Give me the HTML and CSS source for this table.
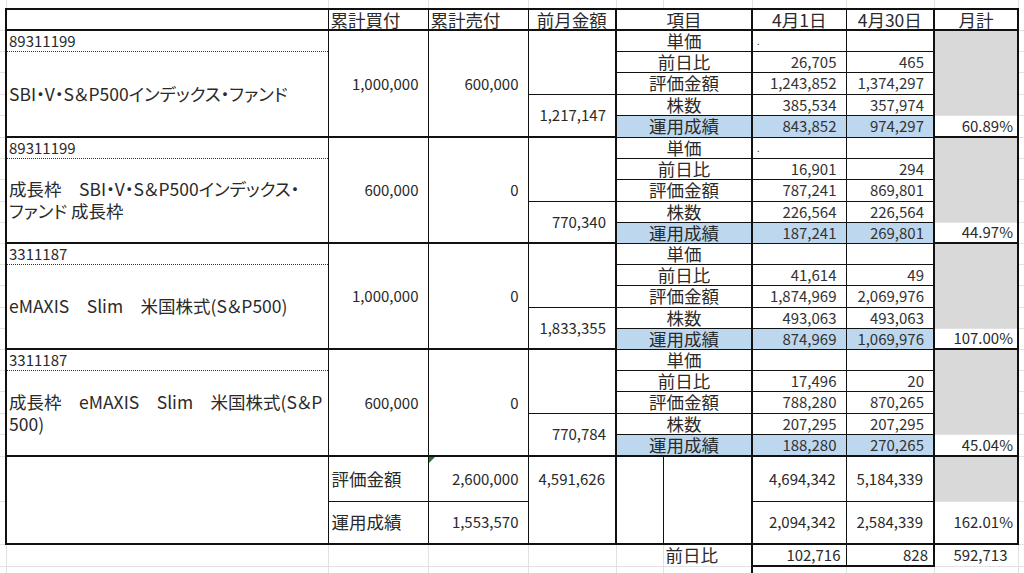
FILE: index.html
```html
<!DOCTYPE html>
<html lang="ja">
<head>
<meta charset="utf-8">
<title>運用成績</title>
<link rel="stylesheet" href="styles.css">
</head>
<body>
<table class="sheet">
<colgroup>
<col class="w-m"><col class="w-a"><col class="w-b"><col class="w-c"><col class="w-d"><col class="w-e1"><col class="w-e2"><col class="w-f"><col class="w-g"><col class="w-h"><col class="w-m2">
</colgroup>
<tbody>
<tr class="h9">
<td class="gt"></td><td class="gt"></td><td class="gt"></td><td class="gt"></td><td class="gt"></td><td class="gt"></td><td class="gt"></td><td class="gt"></td><td class="gt"></td><td class="gt"></td><td class="gt"></td>
</tr>
<tr class="h21">
<td class="m"></td>
<td class="hd hd-a"></td>
<td class="hd lbl">累計買付</td>
<td class="hd lbl">累計売付</td>
<td class="hd ctr">前月金額</td>
<td class="hd ctr sep" colspan="2">項目</td>
<td class="hd ctr sep">4月1日</td>
<td class="hd ctr">4月30日</td>
<td class="hd ctr sep last">月計</td>
<td class="m"></td>
</tr>

<!-- block 1 -->
<tr class="h21">
<td class="m"></td>
<td class="id blk">89311199</td>
<td class="amt blk" rowspan="5">1,000,000</td>
<td class="amt blk" rowspan="5">600,000</td>
<td class="prev blk" rowspan="3"></td>
<td class="item blk" colspan="2">単価</td>
<td class="val fcol blk dotmark">.</td>
<td class="val gcol blk"></td>
<td class="total blk" rowspan="4"></td>
<td class="m"></td>
</tr>
<tr class="h21">
<td class="m"></td>
<td class="name" rowspan="4">SBI・V・S＆P500インデックス・ファンド</td>
<td class="item" colspan="2">前日比</td>
<td class="val fcol">26,705</td>
<td class="val gcol">465</td>
<td class="m"></td>
</tr>
<tr class="h22">
<td class="m"></td>
<td class="item" colspan="2">評価金額</td>
<td class="val fcol">1,243,852</td>
<td class="val gcol">1,374,297</td>
<td class="m"></td>
</tr>
<tr class="h21">
<td class="m"></td>
<td class="prev prev-lo" rowspan="2">1,217,147</td>
<td class="item" colspan="2">株数</td>
<td class="val fcol">385,534</td>
<td class="val gcol">357,974</td>
<td class="m"></td>
</tr>
<tr class="h22">
<td class="m"></td>
<td class="item perf" colspan="2">運用成績</td>
<td class="val fcol perf">843,852</td>
<td class="val gcol perf">974,297</td>
<td class="pct">60.89%</td>
<td class="m"></td>
</tr>

<!-- block 2 -->
<tr class="h21">
<td class="m"></td>
<td class="id blk">89311199</td>
<td class="amt blk" rowspan="5">600,000</td>
<td class="amt blk" rowspan="5">0</td>
<td class="prev blk" rowspan="3"></td>
<td class="item blk" colspan="2">単価</td>
<td class="val fcol blk dotmark">.</td>
<td class="val gcol blk"></td>
<td class="total blk" rowspan="4"></td>
<td class="m"></td>
</tr>
<tr class="h21">
<td class="m"></td>
<td class="name" rowspan="4">成長枠　SBI・V・S＆P500インデックス・<br>ファンド 成長枠</td>
<td class="item" colspan="2">前日比</td>
<td class="val fcol">16,901</td>
<td class="val gcol">294</td>
<td class="m"></td>
</tr>
<tr class="h22">
<td class="m"></td>
<td class="item" colspan="2">評価金額</td>
<td class="val fcol">787,241</td>
<td class="val gcol">869,801</td>
<td class="m"></td>
</tr>
<tr class="h21">
<td class="m"></td>
<td class="prev prev-lo" rowspan="2">770,340</td>
<td class="item" colspan="2">株数</td>
<td class="val fcol">226,564</td>
<td class="val gcol">226,564</td>
<td class="m"></td>
</tr>
<tr class="h21">
<td class="m"></td>
<td class="item perf" colspan="2">運用成績</td>
<td class="val fcol perf">187,241</td>
<td class="val gcol perf">269,801</td>
<td class="pct">44.97%</td>
<td class="m"></td>
</tr>

<!-- block 3 -->
<tr class="h21">
<td class="m"></td>
<td class="id blk">3311187</td>
<td class="amt blk" rowspan="5">1,000,000</td>
<td class="amt blk" rowspan="5">0</td>
<td class="prev blk" rowspan="3"></td>
<td class="item blk" colspan="2">単価</td>
<td class="val fcol blk"></td>
<td class="val gcol blk"></td>
<td class="total blk" rowspan="4"></td>
<td class="m"></td>
</tr>
<tr class="h21">
<td class="m"></td>
<td class="name" rowspan="4">eMAXIS　Slim　米国株式(S＆P500)</td>
<td class="item" colspan="2">前日比</td>
<td class="val fcol">41,614</td>
<td class="val gcol">49</td>
<td class="m"></td>
</tr>
<tr class="h22">
<td class="m"></td>
<td class="item" colspan="2">評価金額</td>
<td class="val fcol">1,874,969</td>
<td class="val gcol">2,069,976</td>
<td class="m"></td>
</tr>
<tr class="h21">
<td class="m"></td>
<td class="prev prev-lo" rowspan="2">1,833,355</td>
<td class="item" colspan="2">株数</td>
<td class="val fcol">493,063</td>
<td class="val gcol">493,063</td>
<td class="m"></td>
</tr>
<tr class="h21">
<td class="m"></td>
<td class="item perf" colspan="2">運用成績</td>
<td class="val fcol perf">874,969</td>
<td class="val gcol perf">1,069,976</td>
<td class="pct">107.00%</td>
<td class="m"></td>
</tr>

<!-- block 4 -->
<tr class="h21">
<td class="m"></td>
<td class="id blk">3311187</td>
<td class="amt blk" rowspan="5">600,000</td>
<td class="amt blk" rowspan="5">0</td>
<td class="prev blk" rowspan="3"></td>
<td class="item blk" colspan="2">単価</td>
<td class="val fcol blk"></td>
<td class="val gcol blk"></td>
<td class="total blk" rowspan="4"></td>
<td class="m"></td>
</tr>
<tr class="h21">
<td class="m"></td>
<td class="name" rowspan="4">成長枠　eMAXIS　Slim　米国株式(S＆P<br>500)</td>
<td class="item" colspan="2">前日比</td>
<td class="val fcol">17,496</td>
<td class="val gcol">20</td>
<td class="m"></td>
</tr>
<tr class="h22">
<td class="m"></td>
<td class="item" colspan="2">評価金額</td>
<td class="val fcol">788,280</td>
<td class="val gcol">870,265</td>
<td class="m"></td>
</tr>
<tr class="h21">
<td class="m"></td>
<td class="prev prev-lo" rowspan="2">770,784</td>
<td class="item" colspan="2">株数</td>
<td class="val fcol">207,295</td>
<td class="val gcol">207,295</td>
<td class="m"></td>
</tr>
<tr class="h22">
<td class="m"></td>
<td class="item perf" colspan="2">運用成績</td>
<td class="val fcol perf">188,280</td>
<td class="val gcol perf">270,265</td>
<td class="pct">45.04%</td>
<td class="m"></td>
</tr>

<!-- summary -->
<tr class="h45">
<td class="m"></td>
<td class="sum-a" rowspan="2"></td>
<td class="sum-lbl sum-top">評価金額</td>
<td class="sum-amt sum-top flag">2,600,000</td>
<td class="sum-prev sum-top">4,591,626</td>
<td class="sum-e1" rowspan="2"></td>
<td class="sum-e2" rowspan="2"></td>
<td class="sum-v fcol sum-top">4,694,342</td>
<td class="sum-v gcol sum-top">5,184,339</td>
<td class="total sum-top"></td>
<td class="m"></td>
</tr>
<tr class="h43">
<td class="m"></td>
<td class="sum-lbl sum-bot">運用成績</td>
<td class="sum-amt sum-bot">1,553,570</td>
<td class="sum-prev sum-bot"></td>
<td class="sum-v fcol sum-bot">2,094,342</td>
<td class="sum-v gcol sum-bot">2,584,339</td>
<td class="pct sum-bot">162.01%</td>
<td class="m"></td>
</tr>

<!-- 前日比 row -->
<tr class="h22">
<td class="m"></td>
<td class="gr"></td>
<td class="gr"></td>
<td class="gr"></td>
<td class="gr"></td>
<td class="gr"></td>
<td class="day-lbl">前日比</td>
<td class="day-v day-f">102,716</td>
<td class="day-v day-g">828</td>
<td class="gr day-h">592,713</td>
<td class="m"></td>
</tr>
<tr class="h7">
<td class="gl"></td>
<td class="gl"></td>
<td class="gl"></td>
<td class="gl"></td>
<td class="gl"></td>
<td class="gl"></td>
<td class="gl"></td>
<td class="gl day-f"></td>
<td class="gl"></td>
<td class="gl"></td>
<td class="gl"></td>
</tr>
</tbody>
</table>
</body>
</html>
```

FILE: styles.css
```css
html, body {
  margin: 0;
  padding: 0;
  background: #ffffff;
  overflow: hidden;
}

.sheet {
  border-collapse: collapse;
  table-layout: fixed;
  width: 1024px;
  font-family: "Noto Sans CJK JP", "Noto Sans", sans-serif;
  font-feature-settings: "palt";
  color: #2a2a2a;
}

.w-m { width: 6px; }
.w-a { width: 322px; }
.w-b { width: 100px; }
.w-c { width: 100px; }
.w-d { width: 88px; }
.w-e1 { width: 47px; }
.w-e2 { width: 89px; }
.w-f { width: 94px; }
.w-g { width: 88px; }
.w-h { width: 84px; }
.w-m2 { width: 6px; }

.h7 { height: 7px; }
.h9 { height: 9px; }
.h21 { height: 21px; }
.h22 { height: 22px; }
.h43 { height: 43px; }
.h45 { height: 45px; }

td {
  padding: 0;
  font-size: 15px;
  line-height: 18px;
  white-space: nowrap;
  vertical-align: middle;
}

/* faint spreadsheet grid outside the table */
.gt { border-right: 1px solid #e2e2e2; }
.gl { border-right: 1px solid #e2e2e2; }
.m { border-bottom: 1px solid #e2e2e2; border-right: 1px solid #e2e2e2; }
.gr { border-right: 1px solid #e2e2e2; border-bottom: 1px solid #e2e2e2; }

/* header */
.hd {
  border-top: 2px solid #111;
  border-bottom: 2px solid #111;
  border-left: 1px solid #111;
  font-size: 17.5px;
}
.hd-a { border-left: 2px solid #111; }
.lbl { text-align: left; padding-left: 2px; }
.ctr { text-align: center; }
.sep { border-left: 2px solid #111; }
.last { border-right: 2px solid #111; }

/* blocks */
.blk { border-top: 2px solid #111; }

.id {
  border-left: 2px solid #111;
  border-bottom: 1px dotted #333;
  padding-left: 2px;
  font-size: 15px;
}
.name {
  border-left: 2px solid #111;
  padding-left: 2px;
  font-size: 17.5px;
  line-height: 22px;
}

.amt {
  border-left: 1px solid #111;
  text-align: right;
  padding-right: 9px;
}
.prev {
  border-left: 1px solid #111;
  text-align: right;
  padding-right: 9px;
}
.prev-lo { border-top: 1px solid #111; }

.item {
  border-left: 2px solid #111;
  border-top: 1px solid #111;
  text-align: center;
  font-size: 17.5px;
}
.val {
  border-top: 1px solid #111;
  text-align: right;
  padding-right: 9px;
  color: #333;
}
.fcol { border-left: 2px solid #111; }
.gcol { border-left: 1px solid #111; }
.val.dotmark {
  text-align: left;
  padding-left: 4px;
  font-size: 9px;
  vertical-align: bottom;
}

.total {
  background: #d9d9d9;
  border-left: 2px solid #111;
  border-right: 2px solid #111;
}
.pct {
  border-left: 2px solid #111;
  border-right: 2px solid #111;
  border-top: 1px solid #e2e2e2;
  text-align: right;
  padding-right: 4px;
}
.perf { background: #bdd7ee; }

/* summary */
.sum-a {
  border-left: 2px solid #111;
  border-top: 2px solid #111;
  border-bottom: 2px solid #111;
}
.sum-top { border-top: 2px solid #111; }
.sum-bot { border-bottom: 2px solid #111; }
.sum-lbl {
  border-left: 1px solid #111;
  text-align: left;
  padding-left: 3px;
  font-size: 17.5px;
}
.sum-lbl.sum-top, .sum-amt.sum-top { border-bottom: 1px solid #111; }
.sum-amt {
  border-left: 1px solid #111;
  text-align: right;
  padding-right: 9px;
}
.sum-prev {
  border-left: 1px solid #111;
  text-align: right;
  padding-right: 10px;
}
.sum-e1 {
  border-left: 2px solid #111;
  border-top: 2px solid #111;
  border-bottom: 2px solid #111;
}
.sum-e2 {
  border-left: 1px solid #111;
  border-top: 2px solid #111;
  border-bottom: 2px solid #111;
}
.sum-v {
  text-align: right;
  padding-right: 10px;
}
.sum-v.sum-top { border-bottom: 1px solid #111; }

.flag { position: relative; }
.flag::before {
  content: "";
  position: absolute;
  top: 0;
  left: 0;
  border-top: 6px solid #1f7a33;
  border-right: 6px solid transparent;
}

/* 前日比 row */
.day-lbl {
  border-bottom: 1px solid #e2e2e2;
  text-align: left;
  padding-left: 2px;
  font-size: 17.5px;
}
.day-v {
  border-bottom: 2px solid #111;
  text-align: right;
  padding-right: 5px;
}
.day-f { border-left: 2px solid #111; }
.day-g {
  border-left: 1px solid #111;
  border-right: 2px solid #111;
}
.day-h {
  text-align: right;
  padding-right: 10px;
}
```
